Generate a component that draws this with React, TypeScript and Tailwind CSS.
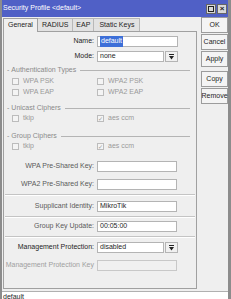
import React from "react";

const font = { fontFamily: '"Liberation Sans", Arial, sans-serif' };

function Check({ label, checked }: { label: string; checked?: boolean }) {
  return (
    <div className="flex h-[11px] items-center gap-[4px] text-[7px] text-[#9a9a9a]">
      <span className="flex h-[7px] w-[7px] items-center justify-center border border-[#bcbcbc] bg-[#f4f4f4] text-[6px] leading-none text-[#9a9a9a]">
        {checked ? "✓" : ""}
      </span>
      <span>{label}</span>
    </div>
  );
}

function Group({ title, className = "" }: { title: string; className?: string }) {
  return (
    <div className={`flex h-[8px] items-center gap-[2px] pl-[3px] pr-[6px] text-[7px] text-[#8a8a8a] ${className}`}>
      <span>-</span>
      <span>{title}</span>
      <span className="ml-[2px] h-px flex-1 bg-[#b4b4b4]" />
    </div>
  );
}

function Sep({ className = "" }: { className?: string }) {
  return <div className={`mx-[1px] h-[2px] border-t border-[#c4c4c4] border-b border-b-white ${className}`} />;
}

function Row({
  label,
  children,
  tone = "mid",
  className = "",
}: {
  label: string;
  children: React.ReactNode;
  tone?: "dark" | "mid" | "dim";
  className?: string;
}) {
  const color = tone === "dark" ? "text-[#1e1e1e]" : tone === "dim" ? "text-[#a0a0a0]" : "text-[#5a5a5a]";
  return (
    <div className={`flex h-[11px] items-center ${className}`}>
      <div className={`w-[93px] shrink-0 pr-[3px] text-right text-[7px] ${color}`}>{label}</div>
      {children}
    </div>
  );
}

function Field({
  children,
  w = "w-[80px]",
  dim,
}: {
  children?: React.ReactNode;
  w?: string;
  dim?: boolean;
}) {
  return (
    <div
      className={`flex h-[11px] ${w} items-center border px-[2px] text-[7px] ${
        dim ? "border-[#c8c8c8] bg-[#f0f0f0] text-[#888]" : "border-[#b4b4b4] bg-white text-[#1e1e1e]"
      }`}
    >
      {children}
    </div>
  );
}

function DropBtn() {
  return (
    <div className="ml-px flex h-[11px] w-[13px] items-center justify-center border border-[#b4b4b4] bg-[#f0f0f0]">
      <svg width="5" height="6" viewBox="0 0 5 6">
        <rect x="0" y="0" width="5" height="1" fill="#222" />
        <path d="M0 2 H5 L2.5 5.5 Z" fill="#222" />
      </svg>
    </div>
  );
}

function Btn({ label }: { label: string }) {
  return (
    <div className="flex h-[16px] w-[27px] items-center justify-center border border-[#9c9c9c] bg-[#f4f4f4] text-[7px] text-[#1e1e1e]">
      {label}
    </div>
  );
}

export default function App() {
  return (
    <div
      style={font}
      className="flex h-[299px] w-[231px] flex-col overflow-hidden border-l-2 border-r-[3px] border-[#8c8c8c] bg-[#efefef]"
    >
      <div className="flex h-[17px] shrink-0 items-center justify-between bg-[#5060c6] pl-px pr-[1px]">
        <span className="text-[7px] text-white">Security Profile &lt;default&gt;</span>
        <div className="flex gap-[1px]">
          <div className="flex h-[10px] w-[10px] items-center justify-center border border-[#666] bg-[#d8d8d8]">
            <div className="h-[6px] w-[6px] border border-[#222]" />
          </div>
          <div className="flex h-[10px] w-[10px] items-center justify-center border border-[#666] bg-[#d8d8d8] text-[8px] font-bold leading-none text-[#222]">
            ×
          </div>
        </div>
      </div>

      <div className="flex flex-1">
        <div className="flex w-[195px] flex-col pl-px">
          <div className="flex h-[14px] items-end text-[7px] text-[#1e1e1e]">
            <div className="z-10 -mb-px flex h-[14px] items-center border border-b-0 border-[#a0a0a0] bg-[#efefef] px-[4px]">
              General
            </div>
            <div className="flex h-[13px] items-center border-t border-r border-[#b8b8b8] bg-[#e2e2e2] px-[4px]">RADIUS</div>
            <div className="flex h-[13px] items-center border-t border-r border-[#b8b8b8] bg-[#e2e2e2] px-[3px]">EAP</div>
            <div className="flex h-[13px] items-center border-t border-r border-[#b8b8b8] bg-[#e2e2e2] px-[5px]">Static Keys</div>
          </div>
          <div className="flex h-[258px] flex-col border border-[#a0a0a0] pt-[4px]">
            <Row label="Name:" tone="dark">
              <Field w="w-[81px]">
                <span className="bg-[#3d6fd8] px-px text-white">default</span>
              </Field>
            </Row>
            <Row label="Mode:" tone="dark" className="mt-[4px]">
              <Field w="w-[67px]">none</Field>
              <DropBtn />
            </Row>

            <Group title="Authentication Types" className="mt-[4px]" />
            <div className="mt-[2px] grid grid-cols-[85px_1fr] pl-[8px]">
              <Check label="WPA PSK" />
              <Check label="WPA2 PSK" />
              <Check label="WPA EAP" />
              <Check label="WPA2 EAP" />
            </div>

            <Group title="Unicast Ciphers" className="mt-[6px]" />
            <div className="mt-[1px] grid grid-cols-[85px_1fr] pl-[8px]">
              <Check label="tkip" />
              <Check label="aes ccm" checked />
            </div>

            <Group title="Group Ciphers" className="mt-[8px]" />
            <div className="mt-[1px] grid grid-cols-[85px_1fr] pl-[8px]">
              <Check label="tkip" />
              <Check label="aes ccm" checked />
            </div>

            <Row label="WPA Pre-Shared Key:" className="mt-[9px]">
              <Field />
            </Row>
            <Row label="WPA2 Pre-Shared Key:" className="mt-[7px]">
              <Field />
            </Row>
            <Sep className="mt-[4px]" />
            <Row label="Supplicant Identity:" className="mt-[5px]">
              <Field>MikroTik</Field>
            </Row>
            <Sep className="mt-[4px]" />
            <Row label="Group Key Update:" className="mt-[3px]">
              <Field>00:05:00</Field>
            </Row>
            <Sep className="mt-[4px]" />
            <Row label="Management Protection:" tone="dark" className="mt-[4px]">
              <Field w="w-[67px]">disabled</Field>
              <DropBtn />
            </Row>
            <Row label="Management Protection Key" tone="dim" className="mt-[7px]">
              <Field dim />
            </Row>
          </div>
        </div>

        <div className="flex flex-1 flex-col gap-px pl-[4px]">
          <Btn label="OK" />
          <Btn label="Cancel" />
          <Btn label="Apply" />
          <div className="h-[2px]" />
          <Btn label="Copy" />
          <Btn label="Remove" />
        </div>
      </div>

      <div className="h-[8px] shrink-0 overflow-hidden border-t border-[#b0b0b0] bg-white pl-px text-[7px] leading-[10px] text-[#1e1e1e]">
        default
      </div>
    </div>
  );
}
